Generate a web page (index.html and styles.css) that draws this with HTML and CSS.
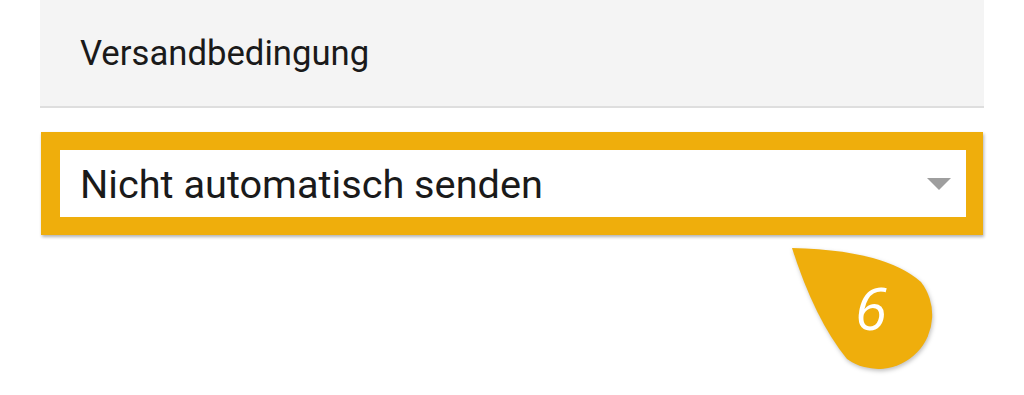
FILE: index.html
```html
<!DOCTYPE html>
<html lang="de">
<head>
<meta charset="utf-8">
<title>Versandbedingung</title>
<link rel="stylesheet" href="styles.css">
</head>
<body>
<div class="page">
  <div class="header"><span class="header-label">Versandbedingung</span></div>
  <div class="select-frame">
    <div class="select">
      <span class="select-value">Nicht automatisch senden</span>
      <span class="select-arrow"></span>
    </div>
  </div>
</div>
<svg class="callout" width="170" height="150" viewBox="0 0 170 150" xmlns="http://www.w3.org/2000/svg">
  <path d="M7,8 Q100,10 136,42 A54 54 0 0 1 62,119 Q30,80 7,8 Z" fill="#efae0c"/>
  <text x="86" y="90" text-anchor="middle" class="callout-num">6</text>
</svg>
</body>
</html>
```
FILE: styles.css
```css
html, body {
  margin: 0;
  padding: 0;
  background: #ffffff;
}
body {
  font-family: Roboto, "Noto Sans", sans-serif;
  color: #1a1a1a;
  position: relative;
  width: 1024px;
  height: 395px;
  overflow: hidden;
}
.page {
  padding: 0 40px;
}
.header {
  background: #f4f4f4;
  border-bottom: 2px solid #dedede;
  display: flex;
  align-items: center;
  padding: 0 0 1px 40px;
  box-sizing: border-box;
  height: 108px;
}
.header-label {
  font-size: 34.7px;
  line-height: 40px;
}
.select-frame {
  margin: 24px 1px 0 1px;
  border-style: solid;
  border-color: #efae0c;
  border-width: 18px 17px 18px 19px;
  box-shadow: 1px 2px 3px rgba(0, 0, 0, 0.3);
}
.select {
  height: 67px;
  background: #ffffff;
  display: flex;
  align-items: center;
  padding: 2px 15px 0 20px;
  box-sizing: border-box;
}
.select-value {
  font-size: 39.7px;
  line-height: 46px;
}
.select-arrow {
  margin-left: auto;
  margin-top: -1px;
  width: 0;
  height: 0;
  border-left: 12px solid transparent;
  border-right: 12px solid transparent;
  border-top: 12px solid #9e9e9e;
}
.callout {
  position: absolute;
  left: 785px;
  top: 240px;
  filter: drop-shadow(1px 2px 2px rgba(0, 0, 0, 0.25));
}
.callout-num {
  font-family: "Open Sans", sans-serif;
  font-style: italic;
  font-weight: 400;
  font-size: 58px;
  fill: #ffffff;
}
```
